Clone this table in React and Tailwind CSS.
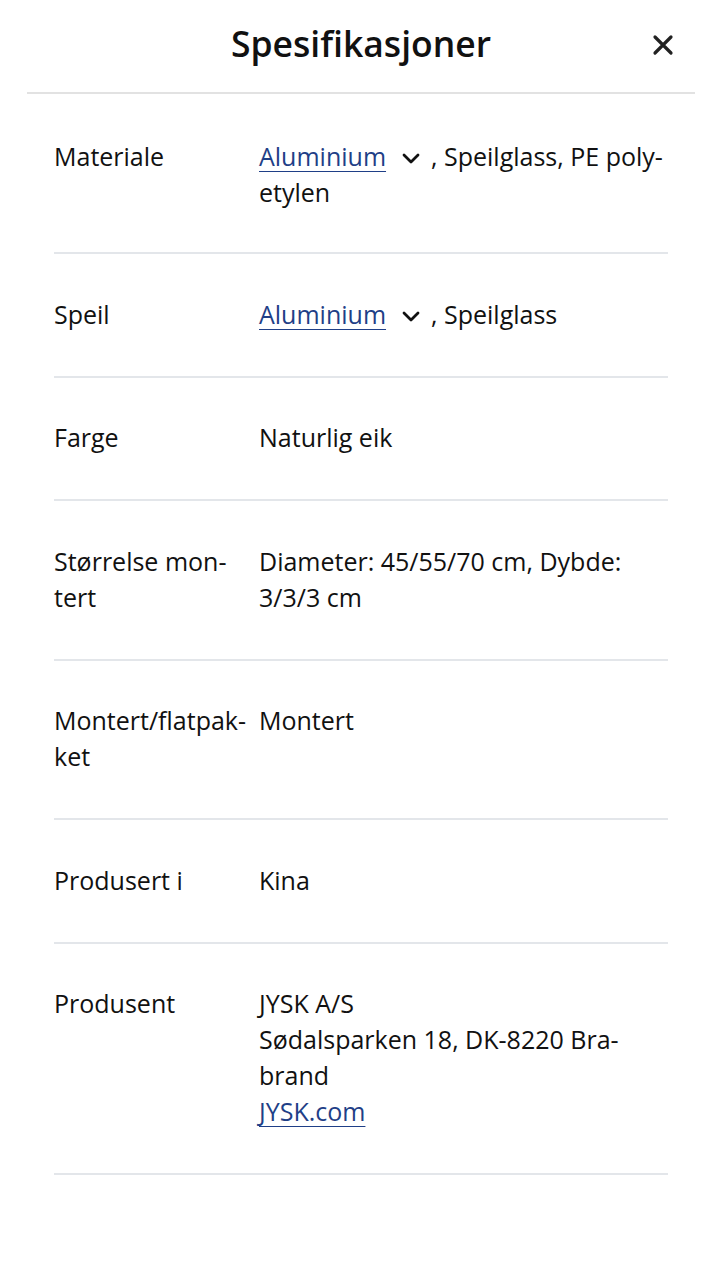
const font = { fontFamily: '"Open Sans", "Noto Sans", sans-serif' }

function Chevron() {
  return (
    <svg width="22" height="22" viewBox="0 0 22 22" fill="none" className="ml-[14px] mr-[9px] inline-block align-[-3px]">
      <path d="M4 8l7 7 7-7" stroke="#111" strokeWidth="2.8" strokeLinecap="round" strokeLinejoin="round" />
    </svg>
  )
}

function Link({ children }) {
  return <a href="#" className="text-[#1f3f87] underline decoration-1 underline-offset-[5px]">{children}</a>
}

const rows = [
  {
    label: 'Materiale',
    value: (
      <>
        <Link>Aluminium</Link>
        <Chevron />, Speilglass, PE poly&shy;etylen
      </>
    ),
    first: true,
  },
  {
    label: 'Speil',
    value: (
      <>
        <Link>Aluminium</Link>
        <Chevron />, Speilglass
      </>
    ),
  },
  { label: 'Farge', value: 'Naturlig eik' },
  { label: 'Størrelse mon\u00adtert', value: 'Diameter: 45/55/70 cm, Dybde: 3/3/3 cm' },
  { label: 'Montert/flatpak\u00adket', value: 'Montert' },
  { label: 'Produsert i', value: 'Kina' },
  {
    label: 'Produsent',
    value: (
      <>
        <span className="block">JYSK A/S</span>
        <span className="block">Sødalsparken 18, DK-8220 Bra&shy;brand</span>
        <Link>JYSK.com</Link>
      </>
    ),
  },
]

export default function App() {
  return (
    <div className="min-h-[1280px] w-[722px] bg-white text-[#111]" style={font}>
      {/* Header */}
      <div className="mx-[27px] flex h-[94px] items-center justify-center border-b-2 border-[#e2e2e2] relative">
        <h1 className="text-[35.5px] font-semibold leading-none -mt-[4px]">Spesifikasjoner</h1>
        <button className="absolute right-[18px] top-[31px] flex h-[28px] w-[28px] items-center justify-center">
          <svg width="22" height="22" viewBox="0 0 22 22" fill="none">
            <path d="M3 3l16 16M19 3L3 19" stroke="#222" strokeWidth="3.2" strokeLinecap="round" />
          </svg>
        </button>
      </div>

      {/* Spec rows */}
      <dl className="mx-[54px] w-[614px]">
        {rows.map((row) => (
          <div
            key={row.label}
            className={`flex border-b-2 border-[#e3e6ea] text-[25px] leading-[36px] ${row.first ? 'pt-[44px] pb-[42px]' : 'pt-[41.5px] pb-[44px]'}`}
          >
            <dt className="w-[205px] shrink-0 pr-[6px]">{row.label}</dt>
            <dd className="flex-1">{row.value}</dd>
          </div>
        ))}
      </dl>
    </div>
  )
}
